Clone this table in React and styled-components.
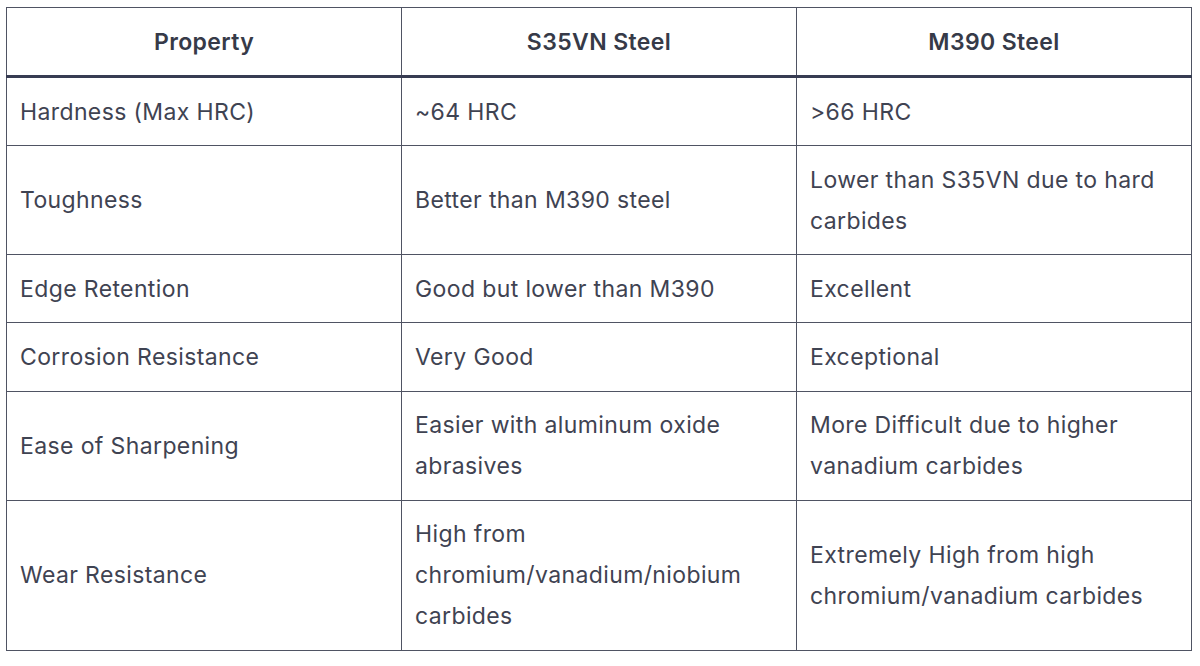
import React from "react";
import styled, { createGlobalStyle } from "styled-components";

const Global = createGlobalStyle`
  html, body { margin: 0; padding: 0; background: #ffffff; }
  body { font-family: Inter, "Noto Sans", sans-serif; }
`;

const Wrap = styled.div`
  padding: 7px 6px;
`;

const Table = styled.table`
  width: 1186px;
  border-collapse: collapse;
  table-layout: fixed;
  color: #3f4352;
  font-size: 23px;
  letter-spacing: 0.38px;
  line-height: 41px;
  border: 1.5px solid #4f5363;
`;

const Th = styled.th`
  font-weight: 600;
  text-align: center;
  padding: 13.5px 14px 12.5px;
  border: 1.5px solid #4f5363;
  border-bottom: 3.5px solid #373c52;
  color: #363a48;
`;

const Td = styled.td`
  text-align: left;
  vertical-align: middle;
  padding: 13.75px 12px 12.4px 13px;
  border: 1.5px solid #4f5363;
`;

const rows = [
  ["Hardness (Max HRC)", "~64 HRC", ">66 HRC"],
  ["Toughness", "Better than M390 steel", "Lower than S35VN due to hard carbides"],
  ["Edge Retention", "Good but lower than M390", "Excellent"],
  ["Corrosion Resistance", "Very Good", "Exceptional"],
  ["Ease of Sharpening", "Easier with aluminum oxide abrasives", "More Difficult due to higher vanadium carbides"],
  ["Wear Resistance", "High from chromium/vanadium/niobium carbides", "Extremely High from high chromium/vanadium carbides"],
];

export default function App() {
  return (
    <Wrap>
      <Global />
      <Table>
        <thead>
          <tr>
            <Th>Property</Th>
            <Th>S35VN Steel</Th>
            <Th>M390 Steel</Th>
          </tr>
        </thead>
        <tbody>
          {rows.map((r) => (
            <tr key={r[0]}>
              {r.map((c, i) => (
                <Td key={i}>{c}</Td>
              ))}
            </tr>
          ))}
        </tbody>
      </Table>
    </Wrap>
  );
}
